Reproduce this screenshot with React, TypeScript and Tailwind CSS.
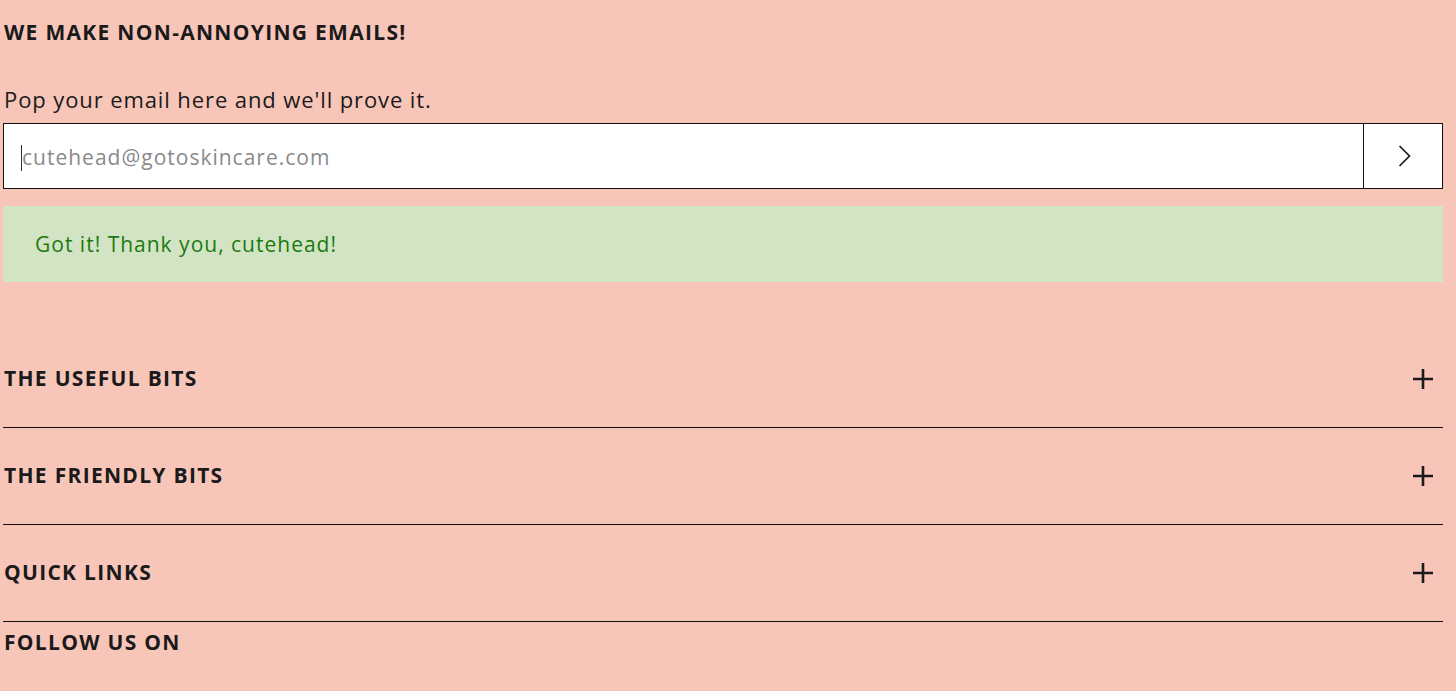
import React from "react";

const font = { fontFamily: "'Open Sans', 'Noto Sans', sans-serif" };

function Plus() {
  return (
    <svg width="22" height="22" viewBox="0 0 22 22" className="text-[#1a1a1a]">
      <path d="M11 1v20M1 11h20" stroke="currentColor" strokeWidth="2.6" fill="none" />
    </svg>
  );
}

function Row({ title }: { title: string }) {
  return (
    <div className="flex h-[97px] items-center justify-between border-b border-[#111]">
      <h3 className="pl-[1px] text-[21px] font-bold uppercase tracking-[1.3px] text-[#1a1a1a]">{title}</h3>
      <div className="mr-[9px]">
        <Plus />
      </div>
    </div>
  );
}

export default function App() {
  return (
    <div className="min-h-[691px] w-full bg-[#f8c6b9]" style={font}>
      <div className="w-[1443px] pl-[3px] pt-[18px]">
        <h2 className="pl-[1px] text-[21px] font-bold uppercase leading-[28px] tracking-[1.3px] text-[#1a1a1a]">
          We make non-annoying emails!
        </h2>
        <p className="mt-[38px] pl-[1px] text-[22px] leading-[30px] tracking-[0.9px] text-[#1a1a1a]">
          Pop your email here and we'll prove it.
        </p>
        <div className="mt-[9px] flex h-[66px] border border-[#111] bg-white">
          <div className="flex flex-1 items-center pl-[17px] pt-[3px]">
            <span className="h-[26px] w-[1px] bg-[#333]" />
            <span className="text-[21px] tracking-[1px] text-[#8a8a8a]">cutehead@gotoskincare.com</span>
          </div>
          <div className="flex w-[79px] items-center justify-center border-l border-[#111] pl-[3px]">
            <svg width="14" height="22" viewBox="0 0 14 22">
              <path d="M1.5 1l10 10-10 10" stroke="#1a1a1a" strokeWidth="1.7" fill="none" />
            </svg>
          </div>
        </div>
        <div className="mt-[17px] flex h-[76px] items-center bg-[#d3e4c5] pl-[32px] pt-[2px] text-[21px] tracking-[1px] text-[#1b7a0e]">
          Got it! Thank you, cutehead!
        </div>
        <div className="mt-[49px]">
          <Row title="The useful bits" />
          <Row title="The friendly bits" />
          <Row title="Quick links" />
        </div>
        <h3 className="mt-[6px] pl-[1px] text-[21px] font-bold uppercase leading-[28px] tracking-[1.3px] text-[#1a1a1a]">
          Follow us on
        </h3>
      </div>
    </div>
  );
}
